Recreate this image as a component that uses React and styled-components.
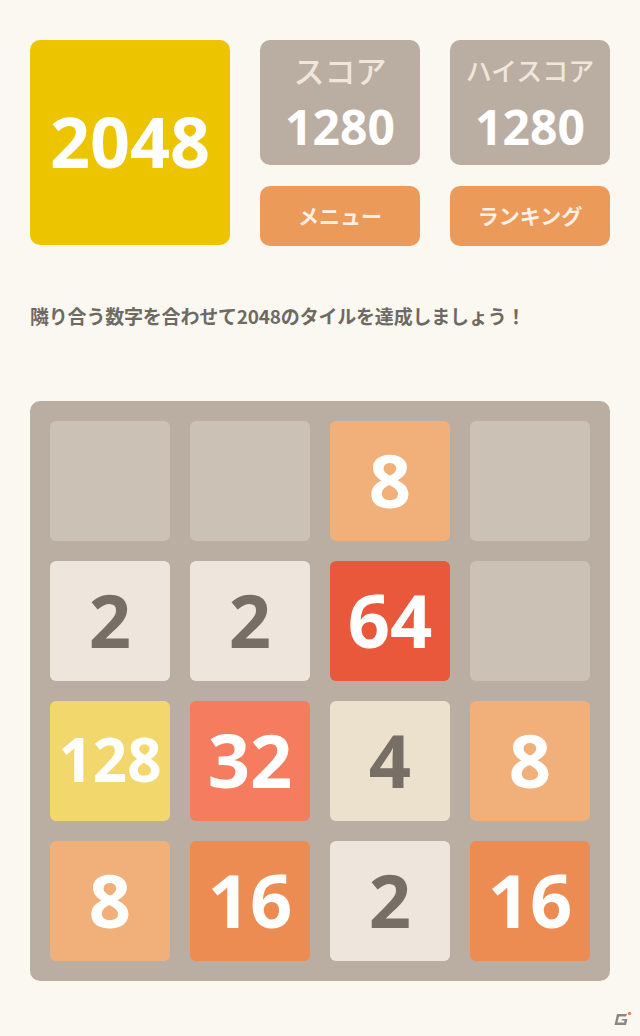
import styled, { createGlobalStyle } from 'styled-components';

const GlobalStyle = createGlobalStyle`
  html, body {
    margin: 0;
    padding: 0;
    background: #faf8f0;
  }
  body {
    font-family: "Open Sans", "Noto Sans CJK JP", sans-serif;
  }
`;

const Page = styled.div`
  position: relative;
  width: 640px;
  height: 1036px;
  box-sizing: border-box;
  padding: 40px 30px 0;
  background: #faf8f0;
`;

const Header = styled.div`
  display: flex;
  gap: 30px;
`;

const Logo = styled.div`
  width: 200px;
  height: 205px;
  border-radius: 10px;
  background: #ecc400;
  color: #fff;
  display: flex;
  align-items: center;
  justify-content: center;
  font-size: 70px;
  font-weight: 700;
  padding-bottom: 4px;
  box-sizing: border-box;
`;

const Controls = styled.div`
  display: grid;
  grid-template-columns: 160px 160px;
  grid-template-rows: 125px 60px;
  column-gap: 30px;
  row-gap: 21px;
`;

const ScoreBox = styled.div`
  border-radius: 10px;
  background: #baaea2;
  display: flex;
  flex-direction: column;
  align-items: center;
  padding-top: 12px;
  box-sizing: border-box;
`;

const ScoreLabel = styled.div`
  font-family: "Noto Sans CJK JP", sans-serif;
  font-size: ${p => p.size || 31}px;
  height: 36px;
  line-height: 36px;
  font-weight: 500;
  color: #f0e6dc;
`;

const ScoreValue = styled.div`
  font-size: 48px;
  line-height: 56px;
  font-weight: 700;
  color: #fff;
  margin-top: 11px;
`;

const Button = styled.div`
  border-radius: 10px;
  background: #ec9a5a;
  color: #fbf0e4;
  display: flex;
  align-items: center;
  justify-content: center;
  font-family: "Noto Sans CJK JP", sans-serif;
  font-size: 21px;
  font-weight: 700;
  padding-bottom: 2px;
  box-sizing: border-box;
`;

const Hint = styled.p`
  margin: 54px 0 0;
  font-family: "Noto Sans CJK JP", sans-serif;
  font-size: 19px;
  line-height: 32px;
  font-weight: 700;
  color: #6f6963;
  letter-spacing: -0.2px;
`;

const Board = styled.div`
  margin-top: 69px;
  width: 580px;
  height: 580px;
  box-sizing: border-box;
  padding: 20px;
  border-radius: 10px;
  background: #baaea2;
  display: grid;
  grid-template-columns: repeat(4, 120px);
  grid-template-rows: repeat(4, 120px);
  gap: 20px;
`;

const tileStyles = {
  0: { bg: '#cbc1b5', fg: 'transparent' },
  2: { bg: '#eee5dc', fg: '#776e66' },
  4: { bg: '#ece1cc', fg: '#776e66' },
  8: { bg: '#f1b07a', fg: '#fff' },
  16: { bg: '#ec8c52', fg: '#fff' },
  32: { bg: '#f57c5f', fg: '#fff' },
  64: { bg: '#e9583a', fg: '#fff' },
  128: { bg: '#f2d86c', fg: '#fff' },
};

const Tile = styled.div`
  border-radius: 6px;
  background: ${p => tileStyles[p.value].bg};
  color: ${p => tileStyles[p.value].fg};
  display: flex;
  align-items: center;
  justify-content: center;
  font-size: ${p => (p.value >= 100 ? '60px' : '74px')};
  font-weight: 700;
  padding-bottom: 4px;
  box-sizing: border-box;
`;

const Watermark = styled.svg`
  position: absolute;
  right: 8px;
  bottom: 9px;
`;

const grid = [
  [0, 0, 8, 0],
  [2, 2, 64, 0],
  [128, 32, 4, 8],
  [8, 16, 2, 16],
];

export default function App() {
  return (
    <Page>
      <GlobalStyle />
      <Header>
        <Logo>2048</Logo>
        <Controls>
          <ScoreBox>
            <ScoreLabel>スコア</ScoreLabel>
            <ScoreValue>1280</ScoreValue>
          </ScoreBox>
          <ScoreBox>
            <ScoreLabel size={26}>ハイスコア</ScoreLabel>
            <ScoreValue>1280</ScoreValue>
          </ScoreBox>
          <Button>メニュー</Button>
          <Button>ランキング</Button>
        </Controls>
      </Header>
      <Hint>隣り合う数字を合わせて2048のタイルを達成しましょう！</Hint>
      <Board>
        {grid.flat().map((v, i) => (
          <Tile key={i} value={v}>{v || ''}</Tile>
        ))}
      </Board>
      <Watermark width="20" height="16" viewBox="0 0 20 16">
        <path d="M5 3 H15 L14 5.5 H7 L5.5 11.5 H12 L12.6 9.5 H9.5 L10 8 H15.5 L14 14 H2.5 Z" fill="#8a8784" />
        <circle cx="17.5" cy="2.5" r="1.8" fill="#ee8a5a" />
      </Watermark>
    </Page>
  );
}
